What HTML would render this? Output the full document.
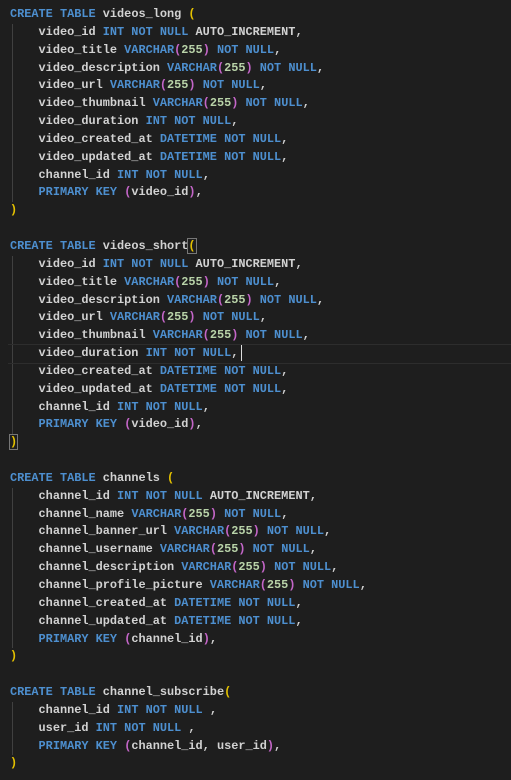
<!DOCTYPE html>
<html><head><style>
html,body{margin:0;padding:0;background:#1e1e1e;width:511px;height:780px;overflow:hidden}
pre{position:absolute;left:10px;top:6px;margin:0;font-family:"Liberation Mono",monospace;font-size:11.9px;line-height:17.85px;color:#d2d2d2;font-weight:bold;letter-spacing:0}
.k{color:#4d8fcf}.y{color:#e4c100}.p{color:#c466c8}.n{color:#b8d2a8}
.g{position:absolute;left:12px;width:1px;background:#404040}
.cur{position:absolute;left:8px;width:503px;top:344px;height:18px;border-top:1px solid #2d2d2d;border-bottom:1px solid #2d2d2d}
.bx{outline:1px solid #777}
.caret{position:absolute;left:241px;top:345px;width:1px;height:16px;background:#ddd}
</style></head><body>
<div class="g" style="top:24px;height:178px"></div>
<div class="g" style="top:256px;height:178px"></div>
<div class="g" style="top:488px;height:160px"></div>
<div class="g" style="top:702px;height:53px"></div>
<div class="cur"></div>
<div class="caret"></div>
<pre><span class="k">CREATE TABLE</span> videos_long <span class="y">(</span>
    video_id <span class="k">INT NOT NULL</span> AUTO_INCREMENT,
    video_title <span class="k">VARCHAR</span><span class="p">(</span><span class="n">255</span><span class="p">)</span> <span class="k">NOT NULL</span>,
    video_description <span class="k">VARCHAR</span><span class="p">(</span><span class="n">255</span><span class="p">)</span> <span class="k">NOT NULL</span>,
    video_url <span class="k">VARCHAR</span><span class="p">(</span><span class="n">255</span><span class="p">)</span> <span class="k">NOT NULL</span>,
    video_thumbnail <span class="k">VARCHAR</span><span class="p">(</span><span class="n">255</span><span class="p">)</span> <span class="k">NOT NULL</span>,
    video_duration <span class="k">INT NOT NULL</span>,
    video_created_at <span class="k">DATETIME NOT NULL</span>,
    video_updated_at <span class="k">DATETIME NOT NULL</span>,
    channel_id <span class="k">INT NOT NULL</span>,
    <span class="k">PRIMARY KEY</span> <span class="p">(</span>video_id<span class="p">)</span>,
<span class="y">)</span>

<span class="k">CREATE TABLE</span> videos_short<span class="y bx">(</span>
    video_id <span class="k">INT NOT NULL</span> AUTO_INCREMENT,
    video_title <span class="k">VARCHAR</span><span class="p">(</span><span class="n">255</span><span class="p">)</span> <span class="k">NOT NULL</span>,
    video_description <span class="k">VARCHAR</span><span class="p">(</span><span class="n">255</span><span class="p">)</span> <span class="k">NOT NULL</span>,
    video_url <span class="k">VARCHAR</span><span class="p">(</span><span class="n">255</span><span class="p">)</span> <span class="k">NOT NULL</span>,
    video_thumbnail <span class="k">VARCHAR</span><span class="p">(</span><span class="n">255</span><span class="p">)</span> <span class="k">NOT NULL</span>,
    video_duration <span class="k">INT NOT NULL</span>,
    video_created_at <span class="k">DATETIME NOT NULL</span>,
    video_updated_at <span class="k">DATETIME NOT NULL</span>,
    channel_id <span class="k">INT NOT NULL</span>,
    <span class="k">PRIMARY KEY</span> <span class="p">(</span>video_id<span class="p">)</span>,
<span class="y bx">)</span>

<span class="k">CREATE TABLE</span> channels <span class="y">(</span>
    channel_id <span class="k">INT NOT NULL</span> AUTO_INCREMENT,
    channel_name <span class="k">VARCHAR</span><span class="p">(</span><span class="n">255</span><span class="p">)</span> <span class="k">NOT NULL</span>,
    channel_banner_url <span class="k">VARCHAR</span><span class="p">(</span><span class="n">255</span><span class="p">)</span> <span class="k">NOT NULL</span>,
    channel_username <span class="k">VARCHAR</span><span class="p">(</span><span class="n">255</span><span class="p">)</span> <span class="k">NOT NULL</span>,
    channel_description <span class="k">VARCHAR</span><span class="p">(</span><span class="n">255</span><span class="p">)</span> <span class="k">NOT NULL</span>,
    channel_profile_picture <span class="k">VARCHAR</span><span class="p">(</span><span class="n">255</span><span class="p">)</span> <span class="k">NOT NULL</span>,
    channel_created_at <span class="k">DATETIME NOT NULL</span>,
    channel_updated_at <span class="k">DATETIME NOT NULL</span>,
    <span class="k">PRIMARY KEY</span> <span class="p">(</span>channel_id<span class="p">)</span>,
<span class="y">)</span>

<span class="k">CREATE TABLE</span> channel_subscribe<span class="y">(</span>
    channel_id <span class="k">INT NOT NULL</span> ,
    user_id <span class="k">INT NOT NULL</span> ,
    <span class="k">PRIMARY KEY</span> <span class="p">(</span>channel_id, user_id<span class="p">)</span>,
<span class="y">)</span></pre>
</body></html>
